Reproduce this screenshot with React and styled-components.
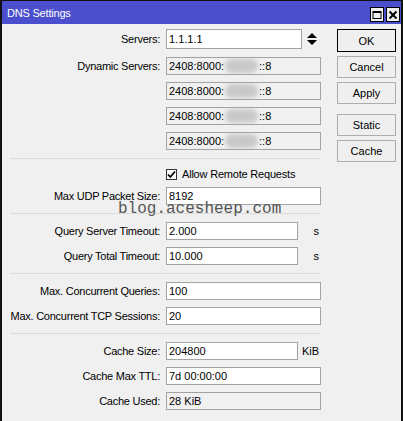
import React from 'react'
import styled, { createGlobalStyle } from 'styled-components'

const GlobalStyle = createGlobalStyle`
  body {
    margin: 0;
    background: #f0f0f0;
  }
`

const Window = styled.div`
  position: relative;
  width: 403px;
  height: 421px;
  box-sizing: border-box;
  border-top: 1px solid #111;
  border-left: 2px solid #111;
  border-right: 2px solid #111;
  background: #f0f0f0;
  display: flex;
  flex-direction: column;
  font-family: "Liberation Sans", Arial, sans-serif;
  font-size: 11px;
  color: #000;
  overflow: hidden;
`

const TitleBar = styled.div`
  height: 23px;
  flex-shrink: 0;
  background: #4b4fcd;
  display: flex;
  align-items: center;
  padding-left: 5px;
  color: #fff;
  letter-spacing: -0.2px;
`

const TitleButtons = styled.div`
  margin-left: auto;
  align-self: flex-start;
  margin-top: 6px;
  padding-right: 1px;
  display: flex;
  gap: 2px;
`

const TitleButton = styled.div`
  width: 14px;
  height: 15px;
  box-sizing: border-box;
  border: 1px solid #000;
  background: #f0f0f0;
  display: flex;
  align-items: center;
  justify-content: center;
`

const Body = styled.div`
  display: flex;
  flex: 1;
`

const Form = styled.div`
  width: 320px;
  padding-top: 5px;
  display: flex;
  flex-direction: column;
`

const Row = styled.div`
  display: flex;
  height: 25px;
  box-sizing: border-box;
  padding-top: ${p => (p.$tall ? 0 : 3)}px;
  align-items: flex-start;
`

const Label = styled.div`
  width: 158px;
  margin-right: 6px;
  flex-shrink: 0;
  text-align: right;
  line-height: ${p => (p.$tall ? 20 : 18)}px;
  letter-spacing: -0.25px;
  white-space: nowrap;
`

const Field = styled.div`
  width: 155px;
  display: flex;
  align-items: center;
`

const Input = styled.div`
  width: ${p => p.$width || 155}px;
  height: ${p => (p.$tall ? 20 : 18)}px;
  box-sizing: border-box;
  border: 1px solid #a3a3a3;
  background: ${p => (p.$disabled ? '#f0f0f0' : '#fff')};
  padding: 0 2px;
  line-height: ${p => (p.$tall ? 18 : 16)}px;
  white-space: nowrap;
  overflow: hidden;
`

const Blur = styled.span`
  display: inline-block;
  width: 33px;
  height: 14px;
  margin: 0 1px;
  vertical-align: -3px;
  border-radius: 7px;
  background: #c9c9c9;
  filter: blur(2px);
`

const Unit = styled.span`
  flex: 1;
  text-align: right;
  padding-right: 2px;
  line-height: 18px;
`

const Spinner = styled.svg`
  margin-left: 5px;
`

const Separator = styled.div`
  height: 1px;
  width: 310px;
  margin: 4px 0 5px 8px;
  background: #dadada;
`

const CheckRow = styled.div`
  height: 20px;
  padding-left: 164px;
  display: flex;
  align-items: center;
  letter-spacing: -0.2px;
`

const CheckBox = styled.div`
  width: 11px;
  height: 11px;
  box-sizing: border-box;
  border: 1px solid #333;
  background: #fff;
  margin-right: 5px;
  display: flex;
  align-items: center;
  justify-content: center;
`

const ButtonColumn = styled.div`
  padding: 5px 0 0 15px;
  display: flex;
  flex-direction: column;
  gap: 4px;
`

const Button = styled.div`
  width: 59px;
  height: ${p => (p.$default ? 23 : 22)}px;
  box-sizing: border-box;
  border: 1px solid ${p => (p.$default ? '#000' : '#adadad')};
  background: #efefef;
  display: flex;
  align-items: center;
  justify-content: center;
  margin-top: ${p => (p.$spaced ? 6 : 0)}px;
`

const Watermark = styled.div`
  position: absolute;
  left: 116px;
  top: 199px;
  font-family: "Liberation Mono", "Courier New", monospace;
  font-size: 16px;
  color: #555;
  pointer-events: none;
`

const dynamicServers = [1, 2, 3, 4]

const MaskedAddress = () => (
  <>2408:8000:<Blur />::8</>
)

const FormRow = ({ label, children, tall }) => (
  <Row $tall={tall}>
    <Label $tall={tall}>{label}</Label>
    <Field>{children}</Field>
  </Row>
)

export default function App() {
  return (
    <>
      <GlobalStyle />
      <Window>
        <TitleBar>
          DNS Settings
          <TitleButtons>
            <TitleButton>
              <svg width="10" height="10" viewBox="0 0 10 10">
                <rect x="1" y="1.5" width="8" height="7" fill="none" stroke="#000" strokeWidth="1" />
                <rect x="1" y="1" width="8" height="2" fill="#000" />
              </svg>
            </TitleButton>
            <TitleButton>
              <svg width="10" height="10" viewBox="0 0 10 10">
                <path d="M1.5 1.5 L8.5 8.5 M8.5 1.5 L1.5 8.5" stroke="#000" strokeWidth="2" />
              </svg>
            </TitleButton>
          </TitleButtons>
        </TitleBar>
        <Body>
          <Form>
            <FormRow label="Servers:" tall>
              <Input $width={136} $tall>1.1.1.1</Input>
              <Spinner width="10" height="12" viewBox="0 0 10 12">
                <path d="M5 0 L10 5 L0 5 Z M0 7 L10 7 L5 12 Z" fill="#000" />
              </Spinner>
            </FormRow>
            {dynamicServers.map(i => (
              <FormRow key={i} label={i === 1 ? 'Dynamic Servers:' : ''}>
                <Input $disabled>
                  <MaskedAddress />
                </Input>
              </FormRow>
            ))}
            <Separator />
            <CheckRow>
              <CheckBox>
                <svg width="9" height="9" viewBox="0 0 9 9">
                  <path d="M1 4.5 L3.3 7 L8 1.5" fill="none" stroke="#000" strokeWidth="1.8" />
                </svg>
              </CheckBox>
              Allow Remote Requests
            </CheckRow>
            <FormRow label="Max UDP Packet Size:">
              <Input>8192</Input>
            </FormRow>
            <Separator />
            <FormRow label="Query Server Timeout:">
              <Input $width={132}>2.000</Input>
              <Unit>s</Unit>
            </FormRow>
            <FormRow label="Query Total Timeout:">
              <Input $width={132}>10.000</Input>
              <Unit>s</Unit>
            </FormRow>
            <Separator />
            <FormRow label="Max. Concurrent Queries:">
              <Input>100</Input>
            </FormRow>
            <FormRow label="Max. Concurrent TCP Sessions:">
              <Input>20</Input>
            </FormRow>
            <Separator />
            <FormRow label="Cache Size:">
              <Input $width={132}>204800</Input>
              <Unit>KiB</Unit>
            </FormRow>
            <FormRow label="Cache Max TTL:">
              <Input>7d 00:00:00</Input>
            </FormRow>
            <FormRow label="Cache Used:">
              <Input $disabled>28 KiB</Input>
            </FormRow>
          </Form>
          <ButtonColumn>
            <Button $default>OK</Button>
            <Button>Cancel</Button>
            <Button>Apply</Button>
            <Button $spaced>Static</Button>
            <Button>Cache</Button>
          </ButtonColumn>
        </Body>
        <Watermark>blog.acesheep.com</Watermark>
      </Window>
    </>
  )
}
